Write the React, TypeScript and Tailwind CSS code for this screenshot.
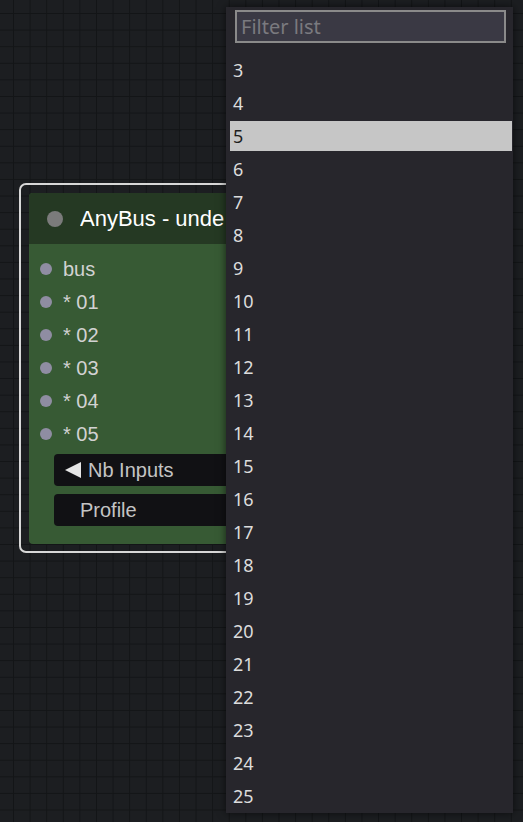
import React from 'react';

const slots = ['bus', '* 01', '* 02', '* 03', '* 04', '* 05'];
const options = Array.from({ length: 23 }, (_, i) => String(i + 3));

function Node() {
  return (
    <div className="absolute left-[19px] top-[183px] w-[320px] h-[370px] rounded-[7px] border-2 border-[#d8d8d8] p-[8px]">
      <div className="w-[290px] h-[351px] rounded-[4px] overflow-hidden bg-[#375a34]">
        {/* Title */}
        <div className="h-[51px] bg-[#253923] flex items-center pl-[18px] gap-[17px]">
          <div className="w-[16px] h-[16px] rounded-full bg-[#7b7b7b]" />
          <span className="w-[146px] overflow-hidden text-[22px] text-white whitespace-nowrap">AnyBus - unde</span>
        </div>

        {/* Inputs */}
        <div className="pt-[8px] pb-[18px]">
          {slots.map((s) => (
            <div key={s} className="h-[33px] flex items-center pl-[11px] gap-[11px]">
              <div className="w-[12px] h-[12px] rounded-full bg-[#8f8da2]" />
              <span className="text-[20px] text-[#d2d2d2]">{s}</span>
            </div>
          ))}

          <div className="mt-[4px] ml-[25px] mr-[10px] flex flex-col gap-[8px]">
            <div className="h-[32px] rounded-[4px] bg-[#111114] flex items-center pl-[10px] gap-[6px] text-[20px] text-[#c4c4c4]">
              <svg width="18" height="18" viewBox="0 0 18 18">
                <polygon points="1,9 17,1 17,17" fill="#e6e6e6" />
              </svg>
              <span>Nb Inputs</span>
            </div>
            <div className="h-[32px] rounded-[4px] bg-[#111114] flex items-center pl-[26px] text-[20px] text-[#c4c4c4]">
              Profile
            </div>
          </div>
        </div>
      </div>
    </div>
  );
}

function FilterMenu() {
  return (
    <div className="absolute left-[226px] top-[7px] w-[287px] h-[806px] bg-[#27262c] shadow-[0_0_8px_rgba(0,0,0,0.6)] pl-[4px] pr-[1px] pt-[3px] font-['Noto_Sans',sans-serif]">
      <div className="ml-[5px] mr-[6px] h-[33px] border-2 border-[#8a8a8a] bg-[#3a3944] flex items-center pl-[4px] text-[20px] text-[#7a7a7f]">
        Filter list
      </div>
      <div className="mt-[12px] flex flex-col gap-[3px]">
        {options.map((o) => (
          <div
            key={o}
            className={
              o === '5'
                ? 'h-[30px] flex items-center pl-[3px] text-[18px] bg-[#c6c6c6] text-[#1e1e1e]'
                : 'h-[30px] flex items-center pl-[3px] text-[18px] text-[#dcdcdc]'
            }
          >
            {o}
          </div>
        ))}
      </div>
    </div>
  );
}

export default function App() {
  return (
    <div
      className="relative w-[523px] h-[822px] overflow-hidden bg-[#1c1e21] font-['Liberation_Sans',Arial,sans-serif] bg-[linear-gradient(to_right,#131517_1px,transparent_1px),linear-gradient(to_bottom,#131517_1px,transparent_1px)] bg-[size:16.6px_16.6px] bg-[position:13px_13px]"
    >
      <Node />
      <FilterMenu />
    </div>
  );
}
